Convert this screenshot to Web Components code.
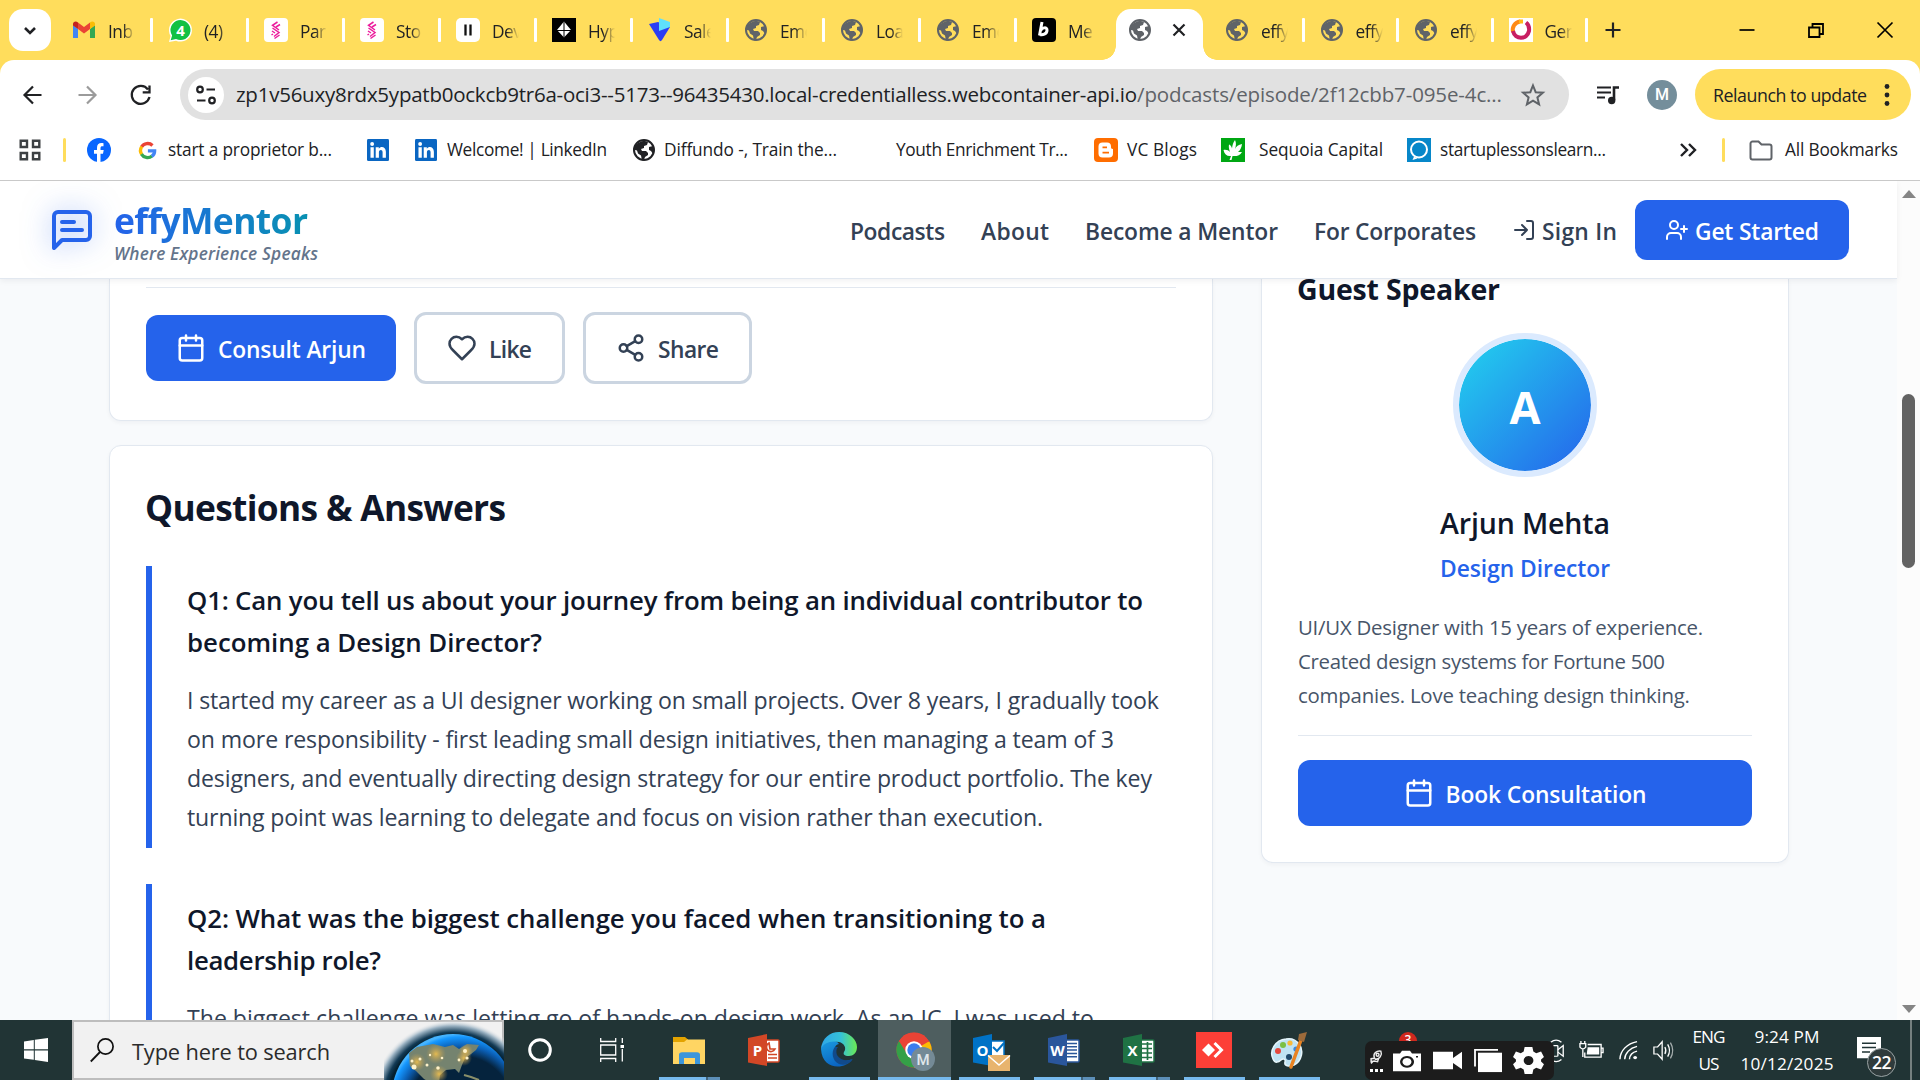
<!DOCTYPE html>
<html lang="en">
<head>
<meta charset="utf-8">
<title>effyMentor</title>
<style>
html,body{margin:0;padding:0;height:1080px;overflow:hidden}
body{font-family:"Open Sans","Noto Sans",sans-serif;color:#202124;background:#fff}
</style>
</head>
<body>
<desktop-screen></desktop-screen>
<script>
const define=(name,html)=>customElements.define(name,class extends HTMLElement{
  connectedCallback(){
    if(this.shadowRoot)return;
    const t=document.createElement('template');
    t.innerHTML=typeof html==='function'?html(this):html;
    this.attachShadow({mode:'open'}).appendChild(document.importNode(t.content,true));
  }
});

/* One line of text set to a given width by its letter spacing. */
customElements.define('fit-text',class extends HTMLElement{
  connectedCallback(){
    if(this.shadowRoot)return;
    const w=+this.getAttribute('w');
    this.attachShadow({mode:'open'}).innerHTML=`<style>:host{display:block;white-space:pre;width:${w}px;flex:none}span{display:inline-block;transform-origin:0 50%}</style><span><slot></slot></span>`;
    const s=this.shadowRoot.querySelector('span'),n=this.textContent.length;
    const cur=s.getBoundingClientRect().width;
    if(cur&&n>1)s.style.letterSpacing=((w-cur)/(n-1)).toFixed(3)+'px';
  }
});

const globe=c=>`<circle cx="12" cy="12" r="10" fill="none" stroke="${c}" stroke-width="2"/><path fill="${c}" d="M3 8C6 5 8 3 13 3l3 1-1 3-3 1v2l-3 1 1 2h4l2 2v2l-3 2-1 3-2 .5-1-5-3-2-1-3-4-1zM17 9l4-1 1 4-1 4-2-3-2-1z"/>`;
const stripe=`<rect width="24" height="24" rx="4" fill="#fff"/><g stroke="#ec1c9c" stroke-width="1.500" fill="none"><path d="M13.500 4l-5 3.300 6.500 4.700M16 6.500l-4 2.500"/><path d="M8.500 10l6.500 4.500-5 4M9 16l-1.500 1M10.500 20.500l5-3.500M8 13l3 2"/></g>`;
const office=(c,d,l,doc)=>`<rect x="17" y="6" width="14" height="22" rx="1" fill="#fff" stroke="${c}" stroke-width="1.500"/>${doc}<path fill="${d}" d="M0 4 19 0v32L0 28.500z"/><text x="9.500" y="21.500" font-family="Open Sans" font-weight="700" font-size="15" fill="#fff" text-anchor="middle">${l}</text>`;
const L='fill="none" stroke="currentColor" stroke-width="2" stroke-linecap="round" stroke-linejoin="round"';
const icons={
 globe:globe('#5f6368'),globeDark:globe('#202124'),
 gmail:`<path fill="#4285f4" d="M1 20V7l5 4v9z"/><path fill="#34a853" d="M18 20v-9l5-4v13z"/><path fill="#ea4335" d="M6 11V4.500l6 4.500 6-4.500V11l-6 4.500z"/><path fill="#c5221f" d="M1 7.500V6c0-2.500 3-3.500 5-1.500V11z"/><path fill="#fbbc04" d="M18 11V4.500C20 2.500 23 3.500 23 6v1.500z"/>`,
 whatsapp:`<path d="M1 24l1.600-6A11.500 11.500 0 1 1 8 22.700z" fill="#fff"/><path d="M2.700 22.300l1.400-4.800A10 10 0 1 1 8 21z" fill="#12c143"/><text x="12.500" y="17.500" font-family="Open Sans" font-weight="700" font-size="15" fill="#fff" text-anchor="middle">4</text>`,
 stripe,
 bars:`<rect width="24" height="24" rx="5" fill="#fff"/><path d="M9.500 6.500v11M14.500 6.500v11" stroke="#111" stroke-width="2.300"/>`,
 gem:`<rect width="24" height="24" fill="#000"/><path d="M12 3.500l7 8.500-7 7.500-7-7.500z" fill="#fff"/><path d="M5 12.500h14M12 3.500v16" stroke="#000" stroke-width="1" fill="none"/>`,
 vee:`<path fill="#2b3df5" d="M1 6l9-2 12 5-8 13c-1 1.500-2 1.500-3 0z"/><path fill="#5fe0fb" d="M11 0l11 4v5l-11 4z"/>`,
 bee:`<rect width="24" height="24" rx="4" fill="#000"/><path d="M10 4L7.500 17.500M8.700 12.500c1-3 6.800-4 6.300 0-.3 3.500-4.500 5-7 4" stroke="#fff" stroke-width="3" fill="none"/>`,
 gen:`<rect width="24" height="24" fill="#fff"/><path d="M11 3.500A8.500 8.500 0 0 0 4 14" stroke="#ff8a14" stroke-width="4" fill="none"/><path d="M4 13c2 9 14 9 16 0 .5-4-1-7-3-8.500" stroke="#c81e62" stroke-width="4" fill="none"/><path d="M10 3.500h4" stroke="#ffb818" stroke-width="4"/>`,
 down:`<path d="M7 10l5 5 5-5" fill="none" stroke="#202124" stroke-width="2.600"/>`,
 x:`<path d="M6.500 6.500l11 11M17.500 6.500l-11 11" stroke="#202124" stroke-width="2.200"/>`,
 plus:`<path d="M12 4.500v15M4.500 12h15" stroke="#202124" stroke-width="2.200"/>`,
 min:`<path d="M4.500 12h15" stroke="#000" stroke-width="1.700"/>`,
 restore:`<path d="M5 9.500h10.500V19H5zM8.500 9V6h10.500v10h-3" fill="none" stroke="#000" stroke-width="1.800"/>`,
 close:`<path d="M4.500 4.500l15 15M19.500 4.500l-15 15" stroke="#000" stroke-width="1.700"/>`,
 back:`<path d="M20.500 12H4M12 3.500L3.500 12l8.500 8.500" fill="none" stroke="currentColor" stroke-width="2.200"/>`,
 reload:`<path d="M19 6.500A9 9 0 1 0 20.500 14M20.500 2.500v6.800h-6.800" fill="none" stroke="#202124" stroke-width="2.300"/>`,
 tune:`<g fill="none" stroke="#202124" stroke-width="2.200"><circle cx="6" cy="6.500" r="2.800"/><path d="M12.500 6.500H21M3 17.500h8.500"/><circle cx="18" cy="17.500" r="2.800"/></g>`,
 star:`<path d="M12 2.500l2.700 6.700 7.200.5-5.500 4.700 1.700 7-6.100-3.800-6.100 3.800 1.700-7L2.100 9.700l7.200-.5z" fill="none" stroke="#5f6368" stroke-width="2"/>`,
 queue:`<path d="M1 4.500h14M1 9.500h14M1 14.500h8" stroke="#202124" stroke-width="2.200"/><path d="M18 17V4.500h5" stroke="#202124" stroke-width="2.600" fill="none"/><circle cx="15.700" cy="17.500" r="3.700" fill="#202124"/>`,
 dots:`<g fill="#202124"><circle cx="12" cy="3.500" r="2.400"/><circle cx="12" cy="12" r="2.400"/><circle cx="12" cy="20.500" r="2.400"/></g>`,
 apps:`<g fill="none" stroke="#3c4043" stroke-width="2.400"><path d="M2.700 2.700h6.300V9H2.700zM15 2.700h6.300V9H15zM2.700 15h6.300v6.300H2.700zM15 15h6.300v6.300H15z"/></g>`,
 facebook:`<circle cx="12" cy="12" r="12" fill="#0866ff"/><path fill="#fff" d="M10 24v-8.300H7V12h3v-2c0-4 2-5.500 6.500-4.800v3c-2.500-.2-3 .4-3 2V12h3.200l-.7 3.700h-2.500V24z"/>`,
 google:`<g fill="none" stroke-width="4.200"><path stroke="#ea4335" d="M4.500 7.500A9 9 0 0 1 18.300 5.600"/><path stroke="#fbbc05" d="M4.700 16.900a9 9 0 0 1 0-9.800"/><path stroke="#34a853" d="M17.700 19A9 9 0 0 1 4.400 16.500"/><path stroke="#4285f4" d="M12.500 12.500h8.500c0 3-1.300 5.500-3.600 6.800"/></g>`,
 linkedin:`<rect x="0" y="0" width="24" height="24" rx="1.500" fill="#0a66c2"/><g fill="#fff"><circle cx="5.600" cy="5.400" r="2.100"/><path d="M3.800 9h3.600v11.500H3.800zM9.500 9h3.400v1.600c2-3.100 7.700-2.400 7.700 3.400v6.500H17v-6c0-3.600-4-3.200-4 0v6H9.500z"/></g>`,
 blogger:`<rect width="24" height="24" rx="4" fill="#ff6d00"/><path fill="#fff" fill-rule="evenodd" d="M8.500 4.500h4.500a4 4 0 0 1 4 4c0 2 .3 2.300 2 2.500v4.500a4 4 0 0 1-4 4H8.500a4 4 0 0 1-4-4v-7a4 4 0 0 1 4-4zm0 4v1.800h4.500V8.500zm0 5.200v1.800h6.500v-1.800z"/>`,
 leaf:`<rect width="24" height="24" fill="#00a713"/><path fill="#fff" d="M8.500 22l1.500-4c-4 .5-6.500-1.500-7.500-6 3-.5 5 .5 6.500 2-1-3-1.500-5-1-7.500 1.500.5 2.500 2 3 4 .5-3.500 1-6 3-8.500 1.500 3 1 6 0 9 1-2.500 3.500-4.500 7-5-.5 3.500-1.500 6-4 8h4c-2 3.500-5.500 4.500-9.500 4L10.500 22z"/>`,
 ring:`<rect width="24" height="24" fill="#0787c9"/><circle cx="12" cy="11.500" r="8" fill="none" stroke="#fff" stroke-width="2"/><path d="M7 18.500l-1.500 3.500 5-1.500z" fill="#fff"/>`,
 chevrons:`<path d="M5 6l6 6-6 6M13 6l6 6-6 6" fill="none" stroke="#202124" stroke-width="2.400"/>`,
 folder:`<path d="M1.500 19.500V5.500a2 2 0 0 1 2-2h6l3 3h8a2 2 0 0 1 2 2v11a2 2 0 0 1-2 2h-17a2 2 0 0 1-2-2z" fill="none" stroke="#5f6368" stroke-width="2"/>`,
 logo:`<g ${L}><path d="M21 15a2 2 0 0 1-2 2H7l-4 4V5a2 2 0 0 1 2-2h14a2 2 0 0 1 2 2z"/><path d="M13 8H7M17 12H7"/></g>`,
 login:`<g ${L}><path d="M15 3h4a2 2 0 0 1 2 2v14a2 2 0 0 1-2 2h-4M10 17l5-5-5-5M15 12H3"/></g>`,
 userplus:`<g ${L}><path d="M16 21v-2a4 4 0 0 0-4-4H6a4 4 0 0 0-4 4v2"/><circle cx="9" cy="7" r="4"/><path d="M19 8v6M22 11h-6"/></g>`,
 calendar:`<g ${L}><rect x="3" y="4" width="18" height="18" rx="2"/><path d="M16 2v4M8 2v4M3 10h18"/></g>`,
 heart:`<g ${L}><path d="M19 14c1.490-1.460 3-3.210 3-5.500A5.500 5.500 0 0 0 16.500 3c-1.760 0-3 .5-4.500 2-1.500-1.500-2.740-2-4.500-2A5.500 5.500 0 0 0 2 8.500c0 2.300 1.500 4.050 3 5.500l7 7Z"/></g>`,
 share:`<g ${L}><circle cx="18" cy="5" r="3"/><circle cx="6" cy="12" r="3"/><circle cx="18" cy="19" r="3"/><path d="M8.590 13.510l6.830 3.980M15.410 6.510l-6.820 3.980"/></g>`,
 win:`<path fill="#fff" d="M0 3.400L9.800 2v9.300H0zM10.800 1.800L24 0v11.300H10.800zM0 12.400h9.800v9.400L0 20.400zM10.800 12.400H24V24l-13.200-1.900z"/>`,
 search:`<circle cx="15.500" cy="8.500" r="7.600" fill="none" stroke="#111" stroke-width="1.700"/><path d="M10 14L.8 23.500" stroke="#111" stroke-width="1.800"/>`,
 cortana:`<circle cx="12" cy="12" r="10.300" fill="none" stroke="#fff" stroke-width="3"/>`,
 taskview:`<g fill="none" stroke="#fff" stroke-width="1.300"><path d="M.7 0v3.500h15V0M.7 7h15v10H.7zM.7 24v-3.500h15V24M22.300 0v5M22.300 11v12.500"/></g><path fill="#fff" d="M20.500 7h3.500v3h-3.500z"/>`,
 explorer:`<path fill="#e3a300" d="M0 0h12l3 3v5H0z"/><path fill="#ffd563" d="M0 6h11l3-3h18v29H0z"/><path fill="#3b96dc" d="M6 32V21q0-3 3-3h15q3 0 3 3v11h-5v-7H11v7z"/>`,
 ppt:office('#d24726','#d24726','P',`<path d="M21 9a4.500 4.500 0 1 0 6 6h-5zM20 20.500h9M20 24h9" fill="none" stroke="#d24726" stroke-width="1.700"/>`),
 word:office('#2b579a','#2a569c','W',`<path d="M19 9.500h10M19 12.800h10M19 16.100h10M19 19.400h10M19 22.700h10" stroke="#2b579a" stroke-width="1.500"/>`),
 excel:office('#207245','#1f7244','X',`<path d="M19 10h10M19 14.500h10M19 19h10M19 23.500h10M24.500 8v18" stroke="#207245" stroke-width="1.700"/>`),
 outlook:`<rect x="15" y="7" width="16" height="18" fill="#fff" stroke="#0072c6" stroke-width="1.500"/><path d="M20 13l4 4 7-8" stroke="#0072c6" stroke-width="2" fill="none"/><path fill="#0072c6" d="M0 4l19-4v32L0 28.500z"/><text x="9.500" y="21.500" font-family="Open Sans" font-weight="700" font-size="15" fill="#fff" text-anchor="middle">O</text><path fill="#e8b46e" d="M15 21h22v16H15z"/><path d="M15 21.500l11 9.500 11-9.500" fill="none" stroke="#fff" stroke-width="1.500"/>`,
 edge:`<defs><linearGradient id="a" x2="1"><stop stop-color="#2fa6e8"/><stop offset=".55" stop-color="#35c1d8"/><stop offset="1" stop-color="#6bea52"/></linearGradient><linearGradient id="b" y2="1" x2=".5"><stop stop-color="#1b9de2"/><stop offset="1" stop-color="#0a63c0"/></linearGradient></defs><path fill="url(#b)" d="M0 17C1 7 14 6 18 12c-5 1-6 7-3 12 3 5 10 6 16 3-6 11-30 12-31-10z"/><path fill="#114a8b" d="M14 15c-4 4-3 14 4 17 5 2 11 0 14-5-6 3-13 1-16-4-1-3-1-6 1-8z"/><path fill="url(#a)" d="M0 17C1 6 9 0 18 0c11 0 18 8 18 15 0 6-4 9-8 9-5 0-6-2-5-4 3-4 0-9-5-10C10 8 2 11 0 17z"/>`,
 chrome:`<circle cx="18" cy="18" r="17.500" fill="#ea4335"/><path d="M18 18L33.200 9.200A17.500 17.500 0 0 1 18 35.500z" fill="#fbbc04"/><path d="M18 18L2.800 9.200A17.500 17.500 0 0 0 18 35.500l8-13z" fill="#34a047"/><path d="M3 9l8 13 7-12h15.300A17.500 17.500 0 0 0 3 9z" fill="#ea4335"/><circle cx="18" cy="18" r="8.700" fill="#fff"/><circle cx="18" cy="18" r="6.700" fill="#3b7ded"/><circle cx="27" cy="27" r="12" fill="#748a96"/><text x="27" y="32.500" font-family="Roboto" font-weight="500" font-size="15" fill="#dfe6ea" text-anchor="middle">M</text>`,
 anydesk:`<rect width="36" height="36" fill="#fd3f37"/><path fill="#fff" d="M12.500 11.500l6.500 6.500-6.500 6.500L6 18z"/><path d="M18.500 11l7 7-7 7" stroke="#fff" stroke-width="3" fill="none"/>`,
 paint:`<path fill="#bfe3f3" stroke="#e6f5fb" stroke-width="1.500" d="M15 7C4 8-2 19 2 27c2 5 6 3 8 1 2-2 5-1 4 2-1 4 4 5 9 3 8-4 10-15 5-21C25 8 20 6 15 7z"/><circle cx="7" cy="19" r="3" fill="#e5483c"/><circle cx="12" cy="13" r="3" fill="#7bc043"/><circle cx="19" cy="11" r="2.600" fill="#f8b93a"/><circle cx="25" cy="17" r="2.600" fill="#3c86d9"/><circle cx="18" cy="25" r="3" fill="#214a6b"/><path d="M30 8L20 35" stroke="#e88322" stroke-width="3.500" stroke-linecap="round"/><path d="M27 8l1-6 8-2-3 10z" fill="#9c6a3a"/>`,
 pin:`<g fill="none" stroke="#eee" stroke-width="2.600"><path d="M8 13C5 6 12 1 20 2c3 6-2 14-10 14z"/><circle cx="14" cy="8" r="2.600"/><path d="M9 14l-7 1v5l6-1 6 1 2-6M6 19l-4 4"/></g>`,
 camera:`<path fill="#fff" fill-rule="evenodd" d="M0 4h7l2-3h8l2 3h9v21H0zM14 7a7 7 0 1 0 .1 0zM14 9.500a4.500 4.500 0 1 1-.1 0zM23 7h2v2h-2z"/>`,
 video:`<path fill="#fff" d="M0 1h20v7l9-7v20l-9-7v7H0z"/>`,
 copy:`<path d="M1 19V1h23" fill="none" stroke="#fff" stroke-width="1.800"/><path fill="#fff" d="M4 4h24v21H4z"/>`,
 gear:`<path fill="#fff" fill-rule="evenodd" d="M10 0h8l1 5 3 2 5-2 3 6-3 3v2l3 3-3 6-5-2-3 2-1 5h-8l-1-5-3-2-5 2-3-6 3-3v-2l-3-3 3-6 5 2 3-2zM14 10a5 5 0 1 0 .1 0z"/>`,
 meet:`<g fill="none" stroke="#fff" stroke-width="1.500"><rect x="2" y="8" width="8" height="13" rx="1"/><path d="M10 13l6-5v13l-6-5M2 4q6-5 12 0M2 25q6 5 12 0"/></g>`,
 battery:`<path fill="#fff" d="M8 7h12v8H7z"/><path d="M5 13v5h17V4H8M22 8h2v5h-2M1 0v3M5 0v3M0 3h6v4q-3 4-6 0zM3 9v9" fill="none" stroke="#fff" stroke-width="1.400"/>`,
 wifi:`<g fill="none" stroke="#fff" stroke-width="1.500"><path d="M1 24A23 23 0 0 1 19 2M6 24A17 17 0 0 1 19 8M11 24a11 11 0 0 1 8-10" /></g><circle cx="17" cy="22" r="2" fill="#fff"/>`,
 volume:`<g fill="none" stroke="#fff" stroke-width="1.400"><path d="M1 8h4l5-6v20l-5-6H1zM13 8q2 4 0 8M16 5q4 7 0 14"/><path d="M19 3q5 9 0 18" opacity=".6"/></g>`,
 note:`<path fill="#fff" d="M0 0h24v22h-5v4l-5-4H0z"/><path d="M5 6.500h14M5 11h14M5 15.500h8" stroke="#213435" stroke-width="1.500"/>`,
 earth:`<defs><radialGradient id="g" gradientUnits="userSpaceOnUse" cx="69" cy="82" r="82"><stop offset=".8" stop-color="#04202f"/><stop offset=".85" stop-color="#123a55"/><stop offset=".93" stop-color="#9db4c4"/><stop offset="1" stop-color="#f1f1f1" stop-opacity="0"/></radialGradient><radialGradient id="e" gradientUnits="userSpaceOnUse" cx="77" cy="88" r="74"><stop offset=".7" stop-color="#05233d"/><stop offset=".84" stop-color="#0b5fb5"/><stop offset=".96" stop-color="#1597ff"/><stop offset="1" stop-color="#46b4ff"/></radialGradient><radialGradient id="h"><stop stop-color="#ffc84a" stop-opacity=".8"/><stop offset="1" stop-color="#caa150" stop-opacity="0"/></radialGradient></defs><rect width="120" height="60" fill="url(#g)"/><circle cx="69" cy="75" r="61" fill="url(#e)"/><path fill="#75836f" d="M25 33l8-6 16-3 12 3 8-2 6 4 8-5 12 1-3 5-5 4-6 4-3 7-3 8-4-4-9 1-6 5-1 8-8 0-7-4-8-8-6-5z"/><g fill="url(#h)"><circle cx="33" cy="42" r="9"/><circle cx="52" cy="34" r="10"/><circle cx="80" cy="38" r="8"/><circle cx="55" cy="54" r="9"/><circle cx="82" cy="31" r="7"/></g><g fill="#fff2c8"><circle cx="30" cy="47" r="2.500"/><circle cx="36" cy="39" r="1.500"/><circle cx="43" cy="45" r="1.500"/><circle cx="54" cy="48" r="1.800"/><circle cx="81" cy="31" r="2"/><circle cx="83" cy="38" r="1.600"/><circle cx="75" cy="40" r="1.400"/><circle cx="58" cy="38" r="1.300"/><circle cx="28" cy="41" r="1.500"/><circle cx="46" cy="35" r="1.200"/></g><path d="M80 55l7 2 8 3" stroke="#8a8f6a" stroke-width="2"/>`
};
const boxes={explorer:'0 0 32 32',ppt:'0 0 32 32',word:'0 0 32 32',excel:'0 0 32 32',outlook:'0 0 37 37',edge:'0 0 36 36',chrome:'0 0 39 39',anydesk:'0 0 36 36',paint:'0 0 36 36',pin:'0 0 24 24',camera:'0 0 28 26',video:'0 0 29 22',copy:'0 0 28 26',gear:'-1 -1 30 32',meet:'0 0 18 28',battery:'-1 -1 26 20',wifi:'0 0 20 25',volume:'0 0 24 24',note:'0 0 24 26',earth:'0 0 120 60'};
define('ui-icon',e=>{
  const n=e.getAttribute('n'),w=e.getAttribute('w')||24,h=e.getAttribute('h')||w;
  return `<style>:host{display:block;flex:none;width:${w}px;height:${h}px}svg{display:block;overflow:${n==='earth'?'hidden':'visible'}}</style><svg width="${w}" height="${h}" viewBox="${boxes[n]||'0 0 24 24'}" preserveAspectRatio="none">${icons[n]||''}</svg>`;
});

/* ---------- browser chrome ---------- */
define('browser-tab',`<style>
:host{display:flex;align-items:center;width:96px;height:60px;box-sizing:border-box;padding-left:15px;flex:none}
:host([late]){width:94.5px}
.t{width:27px;margin-left:12px;overflow:hidden;white-space:nowrap;font-size:17.300px;line-height:26px;letter-spacing:-.5px;padding-top:3px;-webkit-mask:linear-gradient(90deg,#000 55%,transparent)}
i{width:3px;height:24px;background:#fff;margin-left:15px;border-radius:1px}
:host([late]) i{margin-left:13.5px}
:host([last]) i{display:none}
</style><slot name="icon"></slot><div class="t"><slot></slot></div><i></i>`);
define('tab-strip',()=>{
  const tab=(n,t,a='')=>`<browser-tab ${a}><ui-icon slot="icon" n="${n}"></ui-icon>${t}</browser-tab>`;
  return `<style>
:host{display:flex;align-items:center;height:60px;background:#ffdd5c}
.s{width:42px;height:42px;margin:0 6px 0 9px;border-radius:14px;background:#fff;display:flex;align-items:center;justify-content:center;flex:none}
.a{width:87px;height:51px;align-self:flex-end;background:#fff;border-radius:15px 15px 0 0;margin:0 7px 0 3px;display:flex;align-items:center;box-sizing:border-box;padding:0 12px 9px;justify-content:space-between;position:relative;flex:none}
.a::before,.a::after{content:"";position:absolute;bottom:0;width:14px;height:14px}
.a::before{left:-14px;background:radial-gradient(circle at 0 0,transparent 13.500px,#fff 14px)}
.a::after{right:-14px;background:radial-gradient(circle at 100% 0,transparent 13.500px,#fff 14px)}
.w{display:flex;align-items:center;margin-left:110.500px;gap:45px}
.p{margin-left:12.500px}
</style><div class="s"><ui-icon n="down"></ui-icon></div>
${tab('gmail','Inb')}${tab('whatsapp','(4)')}${tab('stripe','Par')}${tab('stripe','Sto')}${tab('bars','Dev')}${tab('gem','Hyp')}${tab('vee','Sale')}${tab('globe','Emo')}${tab('globe','Loa')}${tab('globe','Emo')}${tab('bee','Me','last')}
<div class="a"><ui-icon n="globe"></ui-icon><ui-icon n="x" w="24"></ui-icon></div>
${tab('globe','effy','late')}${tab('globe','effy','late')}${tab('globe','effy','late')}${tab('gen','Ger','late')}
<ui-icon class="p" n="plus"></ui-icon><div class="w"><ui-icon n="min"></ui-icon><ui-icon n="restore"></ui-icon><ui-icon n="close"></ui-icon></div>`});
define('address-row',`<style>
:host{display:flex;align-items:center;height:69px;background:#ffdd5c}
.r{display:flex;align-items:center;height:69px;width:1920px;background:#fff;border-radius:14px 14px 0 0;box-sizing:border-box;padding-left:21px}
.url{display:flex;align-items:center;width:1389px;height:51px;border-radius:26px;background:#e1e1e1;margin-left:27px;box-sizing:border-box;padding-left:8px;font-size:20.500px}
.url fit-text{margin-top:-1px}
.c{width:36px;height:36px;border-radius:50%;background:#fff;display:flex;align-items:center;justify-content:center;margin-right:12px}
.m{width:30px;height:30px;border-radius:50%;background:#748e9b;color:#fff;font:500 16px/30px Roboto;text-align:center;margin:0 18px 0 27px}
.u{display:flex;align-items:center;width:216px;height:51px;border-radius:26px;background:#ffdd5c;box-sizing:border-box;padding-left:18px;font-size:17.800px}
</style><div class="r"><ui-icon n="back"></ui-icon>
<ui-icon n="back" style="color:#9b9b9b;transform:scaleX(-1);margin-left:30px"></ui-icon>
<ui-icon n="reload" style="margin-left:30px"></ui-icon>
<div class="url"><div class="c"><ui-icon n="tune"></ui-icon></div><fit-text w="901">zp1v56uxy8rdx5ypatb0ockcb9tr6a-oci3--5173--96435430.local-credentialless.webcontainer-api.io</fit-text><fit-text w="365" style="color:#5f6368">/podcasts/episode/2f12cbb7-095e-4c...</fit-text><ui-icon n="star" style="margin-left:19px"></ui-icon></div>
<ui-icon n="queue" style="margin-left:27px"></ui-icon><div class="m">M</div>
<div class="u"><fit-text w="154">Relaunch to update</fit-text><ui-icon n="dots" style="margin-left:8px"></ui-icon></div></div>`);
define('bookmark-row',`<style>
:host{display:flex;align-items:center;height:52px;background:#fff;padding:0 0 9px 18px;box-sizing:border-box;font-size:17.300px;border-bottom:1px solid #c9c9c9}
i{width:3px;height:24px;background:#ffdd5c;border-radius:2px}
fit-text{margin-top:-2px}
</style><ui-icon n="apps"></ui-icon><i style="margin-left:21px"></i><ui-icon n="facebook" style="margin-left:21px"></ui-icon>
<ui-icon n="google" w="19" style="margin-left:27px"></ui-icon><fit-text w="164" style="margin-left:11px">start a proprietor b...</fit-text>
<ui-icon n="linkedin" w="22" style="margin-left:35px"></ui-icon><ui-icon n="linkedin" w="22" style="margin-left:26px"></ui-icon><fit-text w="160" style="margin-left:10px">Welcome! | LinkedIn</fit-text>
<ui-icon n="globeDark" style="margin-left:25px"></ui-icon><fit-text w="173" style="margin-left:8px">Diffundo -, Train the...</fit-text>
<fit-text w="172" style="margin-left:59px">Youth Enrichment Tr...</fit-text>
<ui-icon n="blogger" style="margin-left:26px"></ui-icon><fit-text w="70" style="margin-left:9px">VC Blogs</fit-text>
<ui-icon n="leaf" style="margin-left:24px"></ui-icon><fit-text w="124" style="margin-left:14px">Sequoia Capital</fit-text>
<ui-icon n="ring" style="margin-left:24px"></ui-icon><fit-text w="166" style="margin-left:9px">startuplessonslearn...</fit-text>
<ui-icon n="chevrons" style="margin-left:70px"></ui-icon><i style="margin-left:22px"></i>
<ui-icon n="folder" style="margin-left:24px"></ui-icon><fit-text w="113" style="margin-left:12px">All Bookmarks</fit-text>`);

/* ---------- site ---------- */
define('site-header',`<style>
:host{display:flex;align-items:center;height:98px;box-sizing:border-box;border-bottom:1px solid #e2e8f0;background:#fff;padding-left:48px;box-shadow:0 2px 6px rgba(15,23,42,.06);position:relative;z-index:2;flex:none;color:#334155;font-weight:600;font-size:22.800px}
.logo{filter:drop-shadow(0 0 14px rgba(37,99,235,.5));color:#2563eb}
.b{margin-left:18px;width:206px;padding-top:7px}
.n{font-weight:700;font-size:35.500px;line-height:39px;padding-bottom:6px;margin-bottom:-4px;background:linear-gradient(90deg,#2563eb,#0891b2);-webkit-background-clip:text;background-clip:text;color:transparent;width:194px}
.t{font-style:italic;font-size:17.300px;line-height:24px;color:#64748b}
nav{display:flex;align-items:center;margin-left:530px;padding-top:3px}
.g{display:flex;align-items:center;width:214px;height:60px;box-sizing:border-box;padding-left:30px;border-radius:12px;background:#2563eb;color:#fff;margin-left:18px}
</style><ui-icon class="logo" n="logo" w="48"></ui-icon>
<div class="b"><fit-text class="n" w="194">effyMentor</fit-text><fit-text class="t" w="204">Where Experience Speaks</fit-text></div>
<nav><fit-text w="95">Podcasts</fit-text><fit-text w="68" style="margin-left:36px">About</fit-text><fit-text w="193" style="margin-left:36px">Become a Mentor</fit-text><fit-text w="162" style="margin-left:36px">For Corporates</fit-text>
<ui-icon n="login" style="margin:-3px 0 0 36px"></ui-icon><fit-text w="75" style="margin-left:6px">Sign In</fit-text></nav>
<div class="g"><ui-icon n="userplus"></ui-icon><fit-text w="124" style="margin:3px 0 0 6px">Get Started</fit-text></div>`);
define('ui-button',`<style>
:host{display:flex;align-items:center;justify-content:center;gap:12px;height:66px;box-sizing:border-box;padding:0 30px;border-radius:12px;background:#2563eb;color:#fff;font-weight:600;font-size:22.800px;flex:none}
:host([outline]){height:72px;background:#fff;border:3px solid #cbd5e1;color:#334155}
::slotted(fit-text){margin-top:2px}
</style><slot name="icon"></slot><slot></slot>`);
define('ui-card',`<style>:host{display:block;box-sizing:border-box;background:#fff;border:1px solid #e2e8f0;border-radius:12px;padding:36px;box-shadow:0 2px 4px rgba(15,23,42,.04);flex:none}
:host([cut]){border-top:0;border-radius:0 0 12px 12px;padding-top:8px}</style><slot></slot>`);
define('qa-item',`<style>
:host{display:block;box-sizing:border-box;height:282px;border-left:6px solid #2563eb;padding:13px 0 0 35px;margin-bottom:36px}
.q{font-weight:600;font-size:25.800px;line-height:42px;color:#0f172a}
.a{font-size:23.100px;line-height:39px;color:#334155;margin-top:18px}
</style><div class="q"><slot name="q"></slot></div><div class="a"><slot></slot></div>`);
define('episode-column',`<style>
:host{display:flex;flex-direction:column;gap:24px;width:1104px;flex:none}
.d{height:1px;background:#e2e8f0;margin-bottom:24px}
.row{display:flex;align-items:center;gap:18px}
.h{font-weight:700;font-size:35.300px;line-height:48px;color:#0f172a;margin:1px 0 35px -1px}
</style>
<ui-card cut><div class="d"></div><div class="row">
<ui-button><ui-icon slot="icon" n="calendar" w="30"></ui-icon><fit-text w="148">Consult Arjun</fit-text></ui-button>
<ui-button outline><ui-icon slot="icon" n="heart" w="30"></ui-icon><fit-text w="43">Like</fit-text></ui-button>
<ui-button outline><ui-icon slot="icon" n="share" w="30"></ui-icon><fit-text w="61">Share</fit-text></ui-button></div></ui-card>
<ui-card><fit-text class="h" w="361">Questions &amp; Answers</fit-text>
<qa-item><fit-text slot="q" w="956">Q1: Can you tell us about your journey from being an individual contributor to</fit-text><fit-text slot="q" w="355">becoming a Design Director?</fit-text>
<fit-text w="972">I started my career as a UI designer working on small projects. Over 8 years, I gradually took</fit-text><fit-text w="927">on more responsibility - first leading small design initiatives, then managing a team of 3</fit-text><fit-text w="965">designers, and eventually directing design strategy for our entire product portfolio. The key</fit-text><fit-text w="856">turning point was learning to delegate and focus on vision rather than execution.</fit-text></qa-item>
<qa-item><fit-text slot="q" w="859">Q2: What was the biggest challenge you faced when transitioning to a</fit-text><fit-text slot="q" w="194">leadership role?</fit-text>
<fit-text w="907">The biggest challenge was letting go of hands-on design work. As an IC, I was used to</fit-text></qa-item></ui-card>`);
define('speaker-column',`<style>
:host{display:block;width:528px;flex:none}
ui-card{height:584px;display:flex;flex-direction:column;align-items:center}
.w{align-self:flex-start}
.h{font-weight:700;font-size:28.500px;line-height:36px;color:#0f172a;margin-top:-16px;margin-left:-1px}
.av{width:144px;height:144px;box-sizing:border-box;border:6px solid #dbeafe;border-radius:50%;background:linear-gradient(135deg,#22d3ee,#2563eb) padding-box;color:#fff;font-weight:700;font-size:45px;line-height:136px;text-align:center;margin-top:26px;flex:none}
.n{font-weight:600;font-size:28.500px;line-height:40px;color:#0f172a;margin-top:26px}
.r{font-weight:600;font-size:22.800px;line-height:36px;color:#2563eb;margin-top:8px}
.bio{font-size:20.400px;line-height:34px;color:#475569;margin-top:23px}
.d{height:1px;width:454px;background:#e2e8f0;margin:23px 0 24px;flex:none}
ui-button{width:454px}
</style><ui-card cut>
<fit-text class="h w" w="203">Guest Speaker</fit-text><div class="av">A</div>
<fit-text class="n" w="170">Arjun Mehta</fit-text><fit-text class="r" w="170">Design Director</fit-text>
<div class="bio w"><fit-text w="405">UI/UX Designer with 15 years of experience.</fit-text><fit-text w="367">Created design systems for Fortune 500</fit-text><fit-text w="392">companies. Love teaching design thinking.</fit-text></div>
<div class="d"></div>
<ui-button><ui-icon slot="icon" n="calendar" w="30"></ui-icon><fit-text w="201">Book Consultation</fit-text></ui-button></ui-card>`);
define('scroll-bar',`<style>:host{display:flex;flex-direction:column;align-items:center;width:23px;background:#fcfcfc;box-sizing:border-box;padding:9px 0 7px;flex:none}
.u,.v{border:7.500px solid transparent;border-top:0;border-bottom:8px solid #858585;width:0}
.v{border-top:8px solid #858585;border-bottom:0;margin-top:auto}
.t{width:13px;height:174px;border-radius:7px;background:#636363;margin-top:196px}</style><div class="u"></div><div class="t"></div><div class="v"></div>`);
define('web-page',`<style>
:host{display:flex;height:839px;background:#f8fafc;overflow:hidden;flex:none}
.m{width:1897px;display:flex;flex-direction:column;flex:none}
.c{display:flex;align-items:flex-start;gap:48px;padding-left:109px;height:741px}
</style><div class="m"><site-header></site-header><div class="c"><episode-column></episode-column><speaker-column></speaker-column></div></div><scroll-bar></scroll-bar>`);

/* ---------- taskbar ---------- */
define('task-app',e=>`<style>:host{display:flex;flex-direction:column;align-items:center;justify-content:center;width:75px;height:60px;flex:none;position:relative}
:host([on]) .bg{background:#4e5e5f}
.bg{display:flex;width:73px;height:60px;align-items:center;justify-content:center}
.l{position:absolute;bottom:0;height:3px;width:61px;background:#76b9ed}
:host([on]) .l{width:73px}:host([multi]) .l{background:linear-gradient(90deg,#76b9ed 47px,#41637a 47px,#41637a 49px,#5c8fb8 49px)}:host([idle]) .l{display:none}</style><div class="bg"><slot></slot></div><div class="l"></div>`);
define('task-bar',()=>{
 const app=(n,w,h,a='',s='')=>`<task-app ${a}><ui-icon n="${n}" w="${w}" h="${h}" style="${s}"></ui-icon></task-app>`;
 return `<style>
:host{display:flex;align-items:center;height:60px;background:#213435;color:#fff;position:relative;flex:none}
.s{display:flex;align-items:center;width:432px;height:60px;box-sizing:border-box;border:2px solid #bdbdbd;background:#f1f1f1;color:#2b2b2b;margin-left:24px;padding-left:16px;font-size:21.800px;flex:none}
.tray{display:flex;align-items:center;margin-left:232px;font-size:17.200px;height:60px}
.col{display:flex;flex-direction:column;align-items:center;line-height:27px}
.shot{position:absolute;left:1365px;top:21px;width:189px;height:39px;box-sizing:border-box;border-radius:7px;background:#1c1c1c;display:flex;align-items:center;padding-left:5px;z-index:2}
.bd{position:absolute;left:1399px;top:12px;width:18px;height:18px;border-radius:50%;background:#d0281e;font:600 12px/16px "Open Sans";text-align:center}
.nb{position:absolute;left:1867px;top:28px;width:29px;height:29px;box-sizing:border-box;border-radius:50%;border:1px solid #9aa3a4;background:#2f3b3c;font-weight:600;font-size:17.500px;line-height:26px;text-align:center;letter-spacing:-.5px}
.end{width:2px;height:60px;background:#75807f;margin-left:29px}
</style><ui-icon n="win" style="margin-left:24px"></ui-icon>
<div class="s"><ui-icon n="search"></ui-icon><fit-text w="198" style="margin-left:18px;margin-top:2px">Type here to search</fit-text><ui-icon n="earth" w="120" h="60" style="margin-left:54px"></ui-icon></div>
<ui-icon n="cortana" style="margin-left:24px"></ui-icon><ui-icon n="taskview" style="margin:0 27.500px 0 48px"></ui-icon>
${app('explorer',32,27,'multi')}${app('ppt',32,32,'idle')}${app('edge',36,36)}${app('chrome',39,39,'on','margin:3px 0 0 3px')}${app('outlook',37,37,'','margin:5px 0 0 5px')}${app('word',32,32,'multi')}${app('excel',32,32,'multi')}${app('anydesk',36,36)}${app('paint',36,36)}
<div class="tray"><ui-icon n="meet" w="16" h="23" style="margin-left:-10px"></ui-icon><ui-icon n="battery" w="25" h="18" style="margin-left:14px;margin-top:-3px"></ui-icon><ui-icon n="wifi" w="19" h="20" style="margin-left:15px"></ui-icon><ui-icon n="volume" w="22" h="21" style="margin-left:15px"></ui-icon>
<div class="col" style="margin-left:18px"><fit-text w="33">ENG</fit-text><fit-text w="21">US</fit-text></div>
<div class="col" style="margin-left:15px"><fit-text w="65">9:24 PM</fit-text><fit-text w="93">10/12/2025</fit-text></div>
<ui-icon n="note" w="24" h="25" style="margin-left:23px;margin-top:-1px"></ui-icon><div class="end"></div></div>
<div class="bd">3</div>
<div class="shot"><div style="width:14px;display:flex;flex-direction:column;gap:5px"><ui-icon n="pin" w="13" h="14"></ui-icon><div style="height:3px;background:repeating-linear-gradient(90deg,#fff 0 3px,transparent 3px 5px)"></div></div>
<ui-icon n="camera" w="28" h="22" style="margin-left:9px"></ui-icon><ui-icon n="video" w="29" h="19" style="margin-left:12px"></ui-icon><ui-icon n="copy" w="28" h="24" style="margin-left:12px"></ui-icon><ui-icon n="gear" w="29" h="29" style="margin-left:12px"></ui-icon></div>
<div class="nb">22</div>`});
define('desktop-screen',`<style>:host{display:flex;flex-direction:column;width:1920px;height:1080px;overflow:hidden}</style>
<tab-strip></tab-strip><address-row></address-row><bookmark-row></bookmark-row><web-page></web-page><task-bar></task-bar>`);
</script>
</body>
</html>
